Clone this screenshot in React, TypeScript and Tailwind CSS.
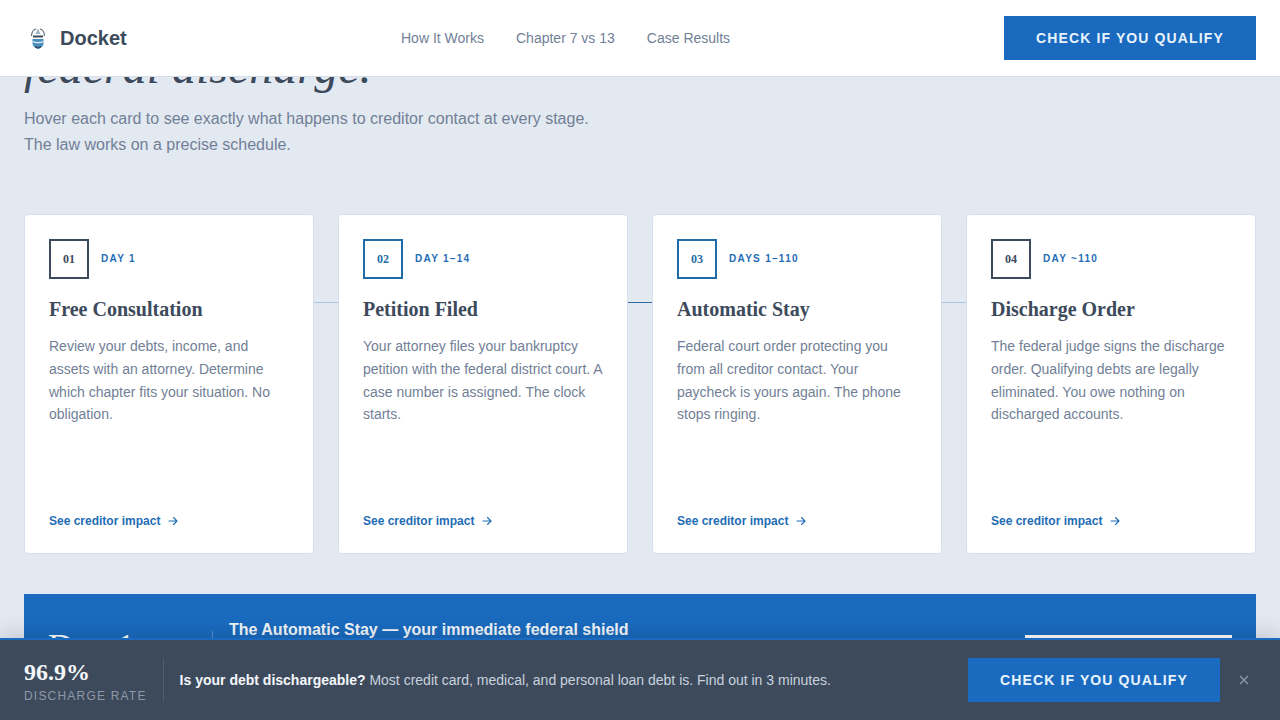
import React from "react";

const sans = "font-['Liberation_Sans',Arial,sans-serif]";
const serif = "font-['Liberation_Serif','Times_New_Roman',serif]";

const cards = [
  { n: "01", day: "DAY 1", title: "Free Consultation", text: "Review your debts, income, and assets with an attorney. Determine which chapter fits your situation. No obligation.", dark: true },
  { n: "02", day: "DAY 1–14", title: "Petition Filed", text: "Your attorney files your bankruptcy petition with the federal district court. A case number is assigned. The clock starts.", dark: false },
  { n: "03", day: "DAYS 1–110", title: "Automatic Stay", text: "Federal court order protecting you from all creditor contact. Your paycheck is yours again. The phone stops ringing.", dark: false },
  { n: "04", day: "DAY ~110", title: "Discharge Order", text: "The federal judge signs the discharge order. Qualifying debts are legally eliminated. You owe nothing on discharged accounts.", dark: true },
];

function Logo() {
  return (
    <svg width="20" height="24" viewBox="0 0 20 24" fill="none" className="shrink-0">
      <path d="M3.5 10 C3.5 6 6 3.5 8 3 M12 3 C14 3.5 16.5 6 16.5 10" stroke="#5b6878" strokeWidth="1.2" />
      <path d="M10 2.5 L12.5 8 H7.5 Z" fill="#9db5c9" />
      <path d="M5 10.5 H15" stroke="#3d4a5c" strokeWidth="2" />
      <path d="M4.5 13 H15.5 V17.5 C15.5 20 13 22 10 23 C7 22 4.5 20 4.5 17.5 Z" fill="#4a8dbf" />
      <path d="M4.5 15.5 C7 17 13 17 15.5 15.5" stroke="#e3eef6" strokeWidth="1.1" />
      <path d="M7 20.5 C9 22 11 22 13 20.5" stroke="#35506e" strokeWidth="1.6" />
    </svg>
  );
}

function Card({ c, i }: { c: (typeof cards)[number]; i: number }) {
  return (
    <div className="relative flex h-[340px] flex-col rounded-[4px] border border-[#d8e1eb] bg-white px-6 pb-[23px] pt-6">
      {i < 3 && (
        <div className={`absolute left-[calc(100%+1px)] top-[87px] h-px w-6 ${i === 1 ? "bg-[#2b6ca8]" : "bg-[#a9c4de]"}`} />
      )}
      <div className="flex items-center gap-3">
        <div className={`flex h-10 w-10 items-center justify-center border-2 bg-white ${serif} text-[12px] font-bold ${c.dark ? "border-[#3d4a5c] text-[#3d4a5c]" : "border-[#1f6da8] text-[#1f6da8]"}`}>
          {c.n}
        </div>
        <div className={`${sans} -mt-px text-[10px] font-bold tracking-[1.3px] text-[#1f6db5]`}>{c.day}</div>
      </div>
      <h3 className={`${serif} mt-4 text-[20px] font-bold leading-[28px] text-[#3d4a5c]`}>{c.title}</h3>
      <p className={`${sans} mt-3 text-[14px] leading-[22.75px] text-[#718096]`}>{c.text}</p>
      <div className={`${sans} mt-auto flex items-center gap-2 text-[12px] font-bold text-[#1f6db5]`}>
        See creditor impact
        <svg width="12" height="12" viewBox="0 0 24 24" fill="none" stroke="currentColor" strokeWidth="2.2" strokeLinecap="round" strokeLinejoin="round" className="-ml-px">
          <path d="M4 12h16M13 5l7 7-7 7" />
        </svg>
      </div>
    </div>
  );
}

export default function App() {
  return (
    <div className={`${sans} relative h-[720px] w-[1280px] overflow-hidden bg-[#e3e9f1]`}>
      <main className="px-6">
        <h1 className={`${serif} pt-[41px] text-[48px] font-normal italic leading-[52px] text-[#3d4a5c]`}>federal discharge.</h1>
        <p className="mt-[13px] text-[16px] leading-[26px] text-[#718096]">
          Hover each card to see exactly what happens to creditor contact at every stage.
          <br />
          The law works on a precise schedule.
        </p>
        <div className="mt-[56px] grid grid-cols-4 gap-6">
          {cards.map((c, i) => (
            <Card key={c.n} c={c} i={i} />
          ))}
        </div>
        <div className="mt-10 flex h-[120px] items-start bg-[#1a6bbf] px-6 pt-6">
          <div className={`${serif} w-[164px] pt-[5px] text-[36px] leading-[48px] text-white`}>Day 1</div>
          <div className="mt-[13px] h-16 w-px bg-white/25" />
          <div className="ml-4 flex-1 pt-px text-[16px] font-bold leading-[22px] text-[#f2f7fc]">The Automatic Stay — your immediate federal shield</div>
          <div className="mt-[17px] h-12 w-[207px] bg-white" />
        </div>
      </main>

      <header className="absolute inset-x-0 top-0 flex h-[77px] items-center justify-between border-b border-[#d5dfea] bg-white pl-7 pr-6">
        <div className="flex items-center gap-3">
          <Logo />
          <span className="text-[20px] font-bold text-[#3d4a5c]">Docket</span>
        </div>
        <nav className="absolute left-[401px] flex gap-8 text-[14px] text-[#718096]">
          <span>How It Works</span>
          <span>Chapter 7 vs 13</span>
          <span>Case Results</span>
        </nav>
        <div className="flex h-11 w-[252px] items-center justify-center bg-[#1a6bbf] text-[14px] font-bold tracking-[1.12px] text-[#e8f3fc]">
          CHECK IF YOU QUALIFY
        </div>
      </header>

      <footer className="absolute inset-x-0 bottom-0 flex h-[82px] items-center border-t-2 border-[#1a6bbf] bg-[#3d4a5c] px-6 shadow-[0_-4px_20px_rgba(0,0,0,0.15)]">
        <div className="pr-4 pt-[2px]">
          <div className={`${serif} -mt-px text-[24px] font-bold leading-[28px] text-[#f4f7fa]`}>96.9%</div>
          <div className="mt-[2px] text-[12px] leading-[16px] tracking-[1.2px] text-[#8d99a8]">DISCHARGE RATE</div>
        </div>
        <div className="h-11 w-px bg-white/10" />
        <p className="ml-4 flex-1 text-[14px] text-[#c9d2dc]">
          <b className="text-[#f4f7fa]">Is your debt dischargeable?</b> Most credit card, medical, and personal loan debt is. Find out in 3 minutes.
        </p>
        <div className="flex h-11 w-[252px] items-center justify-center bg-[#1a6bbf] text-[14px] font-bold tracking-[1.12px] text-[#e8f3fc]">
          CHECK IF YOU QUALIFY
        </div>
        <div className="ml-[15px] mr-[3px] flex w-[18px] justify-center text-[#8d99a8]">
          <svg width="10" height="10" viewBox="0 0 10 10" stroke="currentColor" strokeWidth="1.4"><path d="M1 1l8 8M9 1l-8 8" /></svg>
        </div>
      </footer>
    </div>
  );
}
